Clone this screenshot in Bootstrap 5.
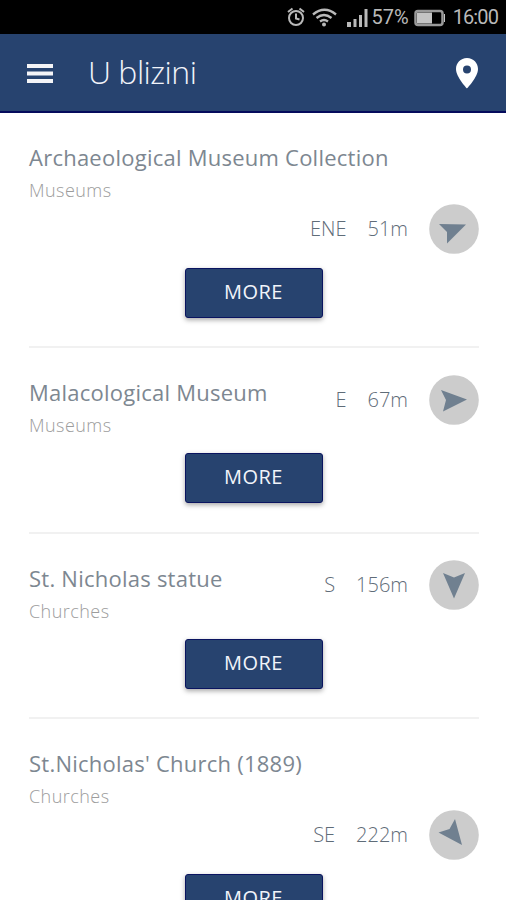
<!DOCTYPE html>
<html lang="en">
<head>
<meta charset="utf-8">
<meta name="viewport" content="width=device-width, initial-scale=1">
<title>U blizini</title>
<link href="https://cdn.jsdelivr.net/npm/bootstrap@5.3.0/dist/css/bootstrap.min.css" rel="stylesheet">
<style>
body{font-family:"Open Sans","Noto Sans",sans-serif;background:#fff;height:900px;overflow:hidden}
.status-strip{height:34px;background:#000;color:#b9b9b9;font:400 20px/36px Roboto,sans-serif;padding-right:8px}
.clock{letter-spacing:-.9px}
.signals{margin-right:2px}
.app-head{height:79px;background:#27436f;border-bottom:2px solid #050b5c;padding:0 26px 0 27px}
.app-title{font-size:32px;font-weight:300;line-height:76px;margin:-2px 0 0 35px;color:#f1f4fa;letter-spacing:-.5px}
.place{padding:27px 0 28.1px;margin:0 27px 0 29px;border-bottom:2px solid #f1f1f1}
.place-top{column-gap:20px}
.place-name{font-size:22px;font-weight:400;line-height:34px;letter-spacing:.24px;color:#7d8791;margin:0;white-space:nowrap}
.place-kind{font-size:18px;font-weight:300;line-height:32px;height:30px;letter-spacing:.45px;color:#9c9c9c;margin:0}
.place-meta{height:49.4px;font-size:20px;font-weight:300;color:#5f6c78;column-gap:21px}
.btn-more{display:block;width:138px;height:50px;margin:14.5px auto 0;padding:0 1px 2px 0;border:1px solid #0a1460;border-radius:3px;background:#27436f;color:#f1f4fa;font-size:20px;line-height:44px;letter-spacing:.5px;box-shadow:0 2px 5px rgba(0,0,0,.35)}
.btn-more:hover{background:#27436f;color:#fff}
svg{display:block;flex:none}
</style>
</head>
<body>
<div class="status-strip d-flex align-items-center justify-content-end">
  <svg class="signals" width="85" height="34" viewBox="285 0 85 34" fill="none" stroke="#b9b9b9" stroke-width="2">
    <circle cx="296" cy="18" r="7"/><path d="M296 13.500v5l3.500 1M288 12l4.500-3.500M304 12l-4.500-3.500"/>
    <path d="M313 14.500q11.500-9.500 23 0M316.500 18q7.500-6 15 0M320 21.500q4-3 8 0" stroke-width="2.300"/>
    <circle cx="324" cy="24.500" r="2" fill="#b9b9b9" stroke="none"/>
    <path fill="#b9b9b9" stroke="none" d="M347 22h4v5h-4zM353.500 19h3v8h-3zM359 15h3v12h-3zM364.500 9h3v18h-3z"/>
  </svg>
  <span>57%</span>
  <svg class="ms-1 me-2" width="32" height="34" viewBox="413 0 32 34"><rect x="415.500" y="11" width="27" height="14" rx="2.500" fill="none" stroke="#999" stroke-width="2.500"/><path fill="#c4c4c4" d="M417 12.500h15v11h-15zM444 14h2v8h-2z"/></svg>
  <span class="clock">16:00</span>
</div>
<header class="app-head d-flex align-items-center">
  <svg width="26" height="20" viewBox="0 0 26 20" fill="#f4f4f7"><path d="M0 1h26v4H0zM0 8.500h26v4H0zM0 16h26v4H0z"/></svg>
  <h1 class="app-title">U blizini</h1>
  <svg class="ms-auto" width="26" height="32" viewBox="0 0 26 32"><path fill="#fff" fill-rule="evenodd" d="M13 1C6.500 1 2 6 2 12c0 8 11 19.500 11 19.500S24 20 24 12C24 6 19.500 1 13 1zm0 7.500a4 4 0 1 1 0 8 4 4 0 0 1 0-8z"/></svg>
</header>
<main>
  <section class="place">
    <div class="place-top d-flex flex-wrap">
      <div><h2 class="place-name">Archaeological Museum Collection</h2><p class="place-kind">Museums</p></div>
      <div class="place-meta d-flex align-items-center ms-auto"><span>ENE</span><span>51m</span>
        <svg width="50" height="50" viewBox="0 0 50 50"><circle cx="25" cy="25" r="24.800" fill="#ccc"/><path fill="#708090" d="M10 20L37 20.500 18 39.500V28z"/></svg></div>
    </div>
    <button class="btn btn-more">MORE</button>
  </section>
  <section class="place">
    <div class="place-top d-flex flex-wrap">
      <div><h2 class="place-name">Malacological Museum</h2><p class="place-kind">Museums</p></div>
      <div class="place-meta d-flex align-items-center ms-auto"><span>E</span><span>67m</span>
        <svg width="50" height="50" viewBox="0 0 50 50"><circle cx="25" cy="25" r="24.800" fill="#ccc"/><path fill="#708090" d="M12 15L38 24.500 14 36.500 17 25z"/></svg></div>
    </div>
    <button class="btn btn-more">MORE</button>
  </section>
  <section class="place">
    <div class="place-top d-flex flex-wrap">
      <div><h2 class="place-name">St. Nicholas statue</h2><p class="place-kind">Churches</p></div>
      <div class="place-meta d-flex align-items-center ms-auto"><span>S</span><span>156m</span>
        <svg width="50" height="50" viewBox="0 0 50 50"><circle cx="25" cy="25" r="24.800" fill="#ccc"/><path fill="#708090" d="M14 13L25 17.500 36 13 25 38.500z"/></svg></div>
    </div>
    <button class="btn btn-more">MORE</button>
  </section>
  <section class="place">
    <div class="place-top d-flex flex-wrap">
      <div><h2 class="place-name">St.Nicholas' Church (1889)</h2><p class="place-kind">Churches</p></div>
      <div class="place-meta d-flex align-items-center ms-auto"><span>SE</span><span>222m</span>
        <svg width="50" height="50" viewBox="0 0 50 50"><circle cx="25" cy="25" r="24.800" fill="#ccc"/><path fill="#708090" d="M9.500 22.500L20.500 19 26 9 33 35z"/></svg></div>
    </div>
    <button class="btn btn-more">MORE</button>
  </section>
</main>
<script src="https://cdn.jsdelivr.net/npm/bootstrap@5.3.0/dist/js/bootstrap.bundle.min.js"></script>
</body>
</html>
